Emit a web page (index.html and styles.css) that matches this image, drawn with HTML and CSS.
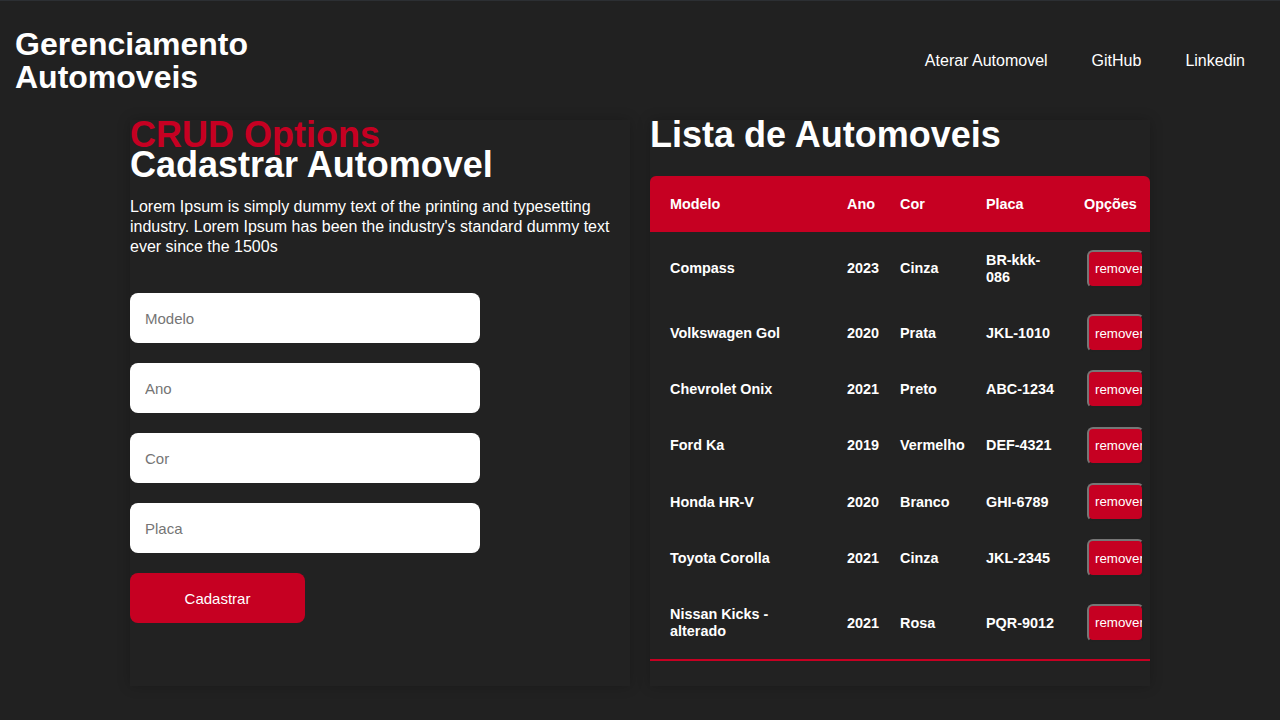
FILE: index.html
```html
<!DOCTYPE html>
<html lang="pt-BR">
<head>
<meta charset="utf-8">
<title>Gerenciamento Automoveis</title>
<link rel="stylesheet" href="styles.css">
</head>
<body>
<header class="topbar">
  <h1 class="brand">Gerenciamento<br>Automoveis</h1>
  <nav class="nav">
    <a href="#" class="nav-link">Aterar Automovel</a>
    <a href="#" class="nav-link">GitHub</a>
    <a href="#" class="nav-link">Linkedin</a>
  </nav>
</header>
<main class="content">
  <section class="panel">
    <h2 class="title">
      <span class="title-accent">CRUD Options</span>
      <span class="title-main">Cadastrar Automovel</span>
    </h2>
    <p class="lead">Lorem Ipsum is simply dummy text of the printing and typesetting industry. Lorem Ipsum has been the industry's standard dummy text ever since the 1500s</p>
    <form class="form">
      <input class="field" type="text" placeholder="Modelo">
      <input class="field" type="text" placeholder="Ano">
      <input class="field" type="text" placeholder="Cor">
      <input class="field" type="text" placeholder="Placa">
      <button class="submit" type="button">Cadastrar</button>
    </form>
  </section>
  <section class="panel panel-list">
    <h2 class="title list-title">Lista de Automoveis</h2>
    <table class="cars">
      <colgroup>
        <col class="c-modelo"><col class="c-ano"><col class="c-cor"><col class="c-placa"><col class="c-opt">
      </colgroup>
      <thead>
        <tr><th>Modelo</th><th>Ano</th><th>Cor</th><th>Placa</th><th>Opções</th></tr>
      </thead>
      <tbody>
        <tr><td>Compass</td><td>2023</td><td>Cinza</td><td>BR-kkk-086</td><td class="opt"><button class="remove" type="button">remover</button></td></tr>
        <tr><td>Volkswagen Gol</td><td>2020</td><td>Prata</td><td>JKL-1010</td><td class="opt"><button class="remove" type="button">remover</button></td></tr>
        <tr><td>Chevrolet Onix</td><td>2021</td><td>Preto</td><td>ABC-1234</td><td class="opt"><button class="remove" type="button">remover</button></td></tr>
        <tr><td>Ford Ka</td><td>2019</td><td>Vermelho</td><td>DEF-4321</td><td class="opt"><button class="remove" type="button">remover</button></td></tr>
        <tr><td>Honda HR-V</td><td>2020</td><td>Branco</td><td>GHI-6789</td><td class="opt"><button class="remove" type="button">remover</button></td></tr>
        <tr><td>Toyota Corolla</td><td>2021</td><td>Cinza</td><td>JKL-2345</td><td class="opt"><button class="remove" type="button">remover</button></td></tr>
        <tr><td>Nissan Kicks - alterado</td><td>2021</td><td>Rosa</td><td>PQR-9012</td><td class="opt"><button class="remove" type="button">remover</button></td></tr>
      </tbody>
    </table>
  </section>
</main>
</body>
</html>
```
FILE: styles.css
```css
* { box-sizing: border-box; }

html, body {
  margin: 0;
  padding: 0;
  background: #212121;
  color: #ffffff;
  font-family: "Liberation Sans", Arial, sans-serif;
}

body { min-height: 720px; }

.topbar {
  display: flex;
  justify-content: space-between;
  align-items: center;
  border-top: 1px solid #2c2f33;
  padding: 27px 35px 0 15px;
}

.brand {
  margin: 0;
  font-size: 32px;
  line-height: 33px;
  font-weight: 700;
}

.nav {
  display: flex;
  gap: 44px;
}

.nav-link {
  color: #ffffff;
  text-decoration: none;
  font-size: 16px;
}

.content {
  display: flex;
  justify-content: center;
  gap: 20px;
  margin-top: 26px;
}

.panel {
  width: 500px;
  background: #222222;
  box-shadow: 0 0 12px rgba(0, 0, 0, 0.22);
  padding-bottom: 25px;
}

.title {
  margin: 0;
  font-size: 36px;
  line-height: 30px;
  font-weight: 700;
}

.title-accent,
.title-main { display: block; }

.title-accent { color: #c60022; }

.list-title { margin-bottom: 26px; }

.lead {
  margin: 17px 0 0;
  font-size: 16px;
  line-height: 20px;
}

.form {
  display: flex;
  flex-direction: column;
  align-items: flex-start;
  gap: 20px;
  margin-top: 36px;
}

.field {
  width: 350px;
  height: 50px;
  border: none;
  border-radius: 8px;
  padding: 0 15px;
  font-family: "Liberation Sans", Arial, sans-serif;
  font-size: 15px;
  color: #222;
  background: #ffffff;
  outline: none;
}

.field::placeholder { color: #757575; }

.submit {
  width: 175px;
  height: 50px;
  border: none;
  border-radius: 8px;
  background: #c60022;
  color: #ffffff;
  font-family: "Liberation Sans", Arial, sans-serif;
  font-size: 15px;
}

.cars {
  width: 500px;
  table-layout: fixed;
  border-collapse: separate;
  border-spacing: 0;
  font-size: 14.4px;
  font-weight: 700;
  line-height: 16.3px;
}

.c-modelo { width: 177px; }
.c-ano { width: 53px; }
.c-cor { width: 86px; }
.c-placa { width: 98px; }
.c-opt { width: 86px; }

.cars th,
.cars td {
  padding: 20px 8px 20px 20px;
  text-align: left;
  vertical-align: middle;
  white-space: normal;
}

.cars th {
  background: #c60022;
  color: #ffffff;
}

.cars th:first-child { border-top-left-radius: 6px; }
.cars th:last-child { border-top-right-radius: 6px; }

.cars td.opt {
  padding: 9px 0 9px 23px;
}

.cars tbody tr:last-child td {
  border-bottom: 2px solid #c60022;
}

.remove {
  display: block;
  width: 57px;
  height: 38px;
  padding: 0 0 0 6px;
  border: 2px outset #767676;
  border-radius: 6px;
  background: #c60022;
  color: #ffffff;
  font-family: "Liberation Sans", Arial, sans-serif;
  font-size: 13.33px;
  font-weight: 400;
  text-align: left;
  white-space: nowrap;
  overflow: hidden;
}
```
